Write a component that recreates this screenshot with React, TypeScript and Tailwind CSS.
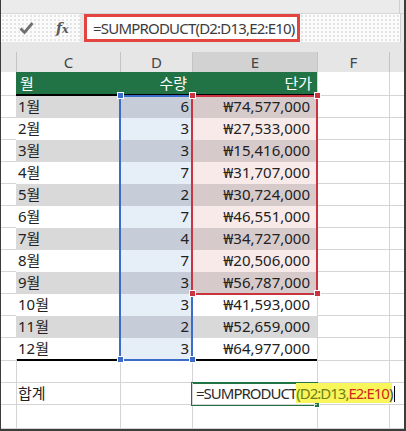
import React from 'react';

type Row = { m: string; q: number; p: string };

const rows: Row[] = [
  { m: '1월', q: 6, p: '₩74,577,000' },
  { m: '2월', q: 3, p: '₩27,533,000' },
  { m: '3월', q: 3, p: '₩15,416,000' },
  { m: '4월', q: 7, p: '₩31,707,000' },
  { m: '5월', q: 2, p: '₩30,724,000' },
  { m: '6월', q: 7, p: '₩46,551,000' },
  { m: '7월', q: 4, p: '₩34,727,000' },
  { m: '8월', q: 7, p: '₩20,506,000' },
  { m: '9월', q: 3, p: '₩56,787,000' },
  { m: '10월', q: 3, p: '₩41,593,000' },
  { m: '11월', q: 2, p: '₩52,659,000' },
  { m: '12월', q: 3, p: '₩64,977,000' },
];

const GRID = 'grid grid-cols-[15px_104px_72px_125px_72px_1fr]';
const DOTS = 'bg-[#fbfbfb] bg-[radial-gradient(#e2e2e2_0.7px,transparent_0.8px)] bg-[length:4px_4px]';

const DataRow: React.FC<{ row: Row; i: number }> = ({ row, i }) => {
  const band = i % 2 === 0;
  const last = i === 11;
  const inRed = i < 9;
  const c = band ? 'bg-[#d9d9d9] border-[#d9d9d9]' : 'bg-white border-white';
  const d = band ? 'bg-[#c6cdd8] border-[#c6cdd8]' : 'bg-[#e6eef8] border-[#e6eef8]';
  const e = inRed
    ? band
      ? 'bg-[#d7cacb] border-[#d7cacb]'
      : 'bg-[#f9eaea] border-[#f9eaea]'
    : band
      ? 'bg-[#d9d9d9] border-[#d9d9d9]'
      : 'bg-white border-white';
  const bottom = last ? 'border-b-2 border-b-black' : 'border-b';
  return (
    <div className={`${GRID} h-[22px] leading-[21px]`}>
      <div className="border-b border-[#d4d4d4] bg-white" />
      <div className={`border-l pl-[1px] ${c} ${bottom}`}>{row.m}</div>
      <div className={`border-l pr-[3px] text-right ${d} ${bottom}`}>{row.q}</div>
      <div className={`border-l pr-[7px] text-right ${e} ${bottom}`}>{row.p}</div>
      <div className="border-l border-b border-[#d4d4d4] bg-white" />
      <div className="border-l border-b border-[#d4d4d4] bg-white" />
    </div>
  );
};

const App: React.FC = () => {
  return (
    <div className="relative flex h-[431px] w-[406px] flex-col overflow-hidden border-l border-r-2 border-b-2 border-[#3c3c3c] bg-white font-['Noto_Sans','Noto_Sans_CJK_KR',sans-serif] text-[15px] text-[#222]">
      {/* top strip */}
      <div className="flex h-[14px] border-b border-[#d6d6d6] bg-[#ebebeb]">
        <div className="flex-1" />
        <div className="w-[5px] border-l border-[#cfcfcf]" />
      </div>

      {/* formula bar */}
      <div className="flex h-[28px] bg-[#e6e6e6]">
        <div className={`flex w-[79px] items-center ${DOTS}`}>
          <svg className="ml-[18px] h-[14px] w-[15px]" viewBox="0 0 15 14">
            <path d="M1.5 7.5 L5.5 11.5 L13.5 2" fill="none" stroke="#707070" strokeWidth="2.8" />
          </svg>
          <span className="ml-[22px] font-['DejaVu_Serif',serif] text-[14px] font-semibold italic text-[#5a5a5a]">
            f<span className="text-[11px]">x</span>
          </span>
        </div>
        <div className="w-[4px]" />
        <div className={`flex flex-1 ${DOTS}`}>
          <div className="flex w-[216px] items-center border-[3px] border-[#e2453f] bg-white pl-[6px] text-[15px] tracking-[-0.8px] text-[#3c3c3c]">
            =SUMPRODUCT(D2:D13,E2:E10)
          </div>
        </div>
        <div className="w-[4px] border-l border-[#cfcfcf] bg-[#ebebeb]" />
      </div>

      {/* band */}
      <div className="h-[10px] bg-[#e6e6e6]" />

      {/* column headers */}
      <div className={`${GRID} h-[20px] bg-[#e6e6e6] text-center leading-[20px] text-[#444]`}>
        <div />
        <div className="border-l border-[#c4c4c4]">C</div>
        <div className="border-l border-[#c4c4c4]">D</div>
        <div className="border-l border-[#c4c4c4] bg-[#d2d2d2]">E</div>
        <div className="border-l border-[#c4c4c4]">F</div>
        <div className="border-l border-[#c4c4c4]" />
      </div>

      {/* table header */}
      <div className={`${GRID} h-[24px] leading-[22px] text-white`}>
        <div className="border-b border-[#d4d4d4] bg-white" />
        <div className="border-b-2 border-black bg-[#217346] pl-[4px]">월</div>
        <div className="border-b-2 border-black bg-[#217346] pr-[5px] text-right">수량</div>
        <div className="border-b-2 border-black bg-[#217346] pr-[5px] text-right">단가</div>
        <div className="border-l border-b border-[#d4d4d4] bg-white" />
        <div className="border-l border-b border-[#d4d4d4] bg-white" />
      </div>

      {rows.map((r, i) => (
        <DataRow key={r.m} row={r} i={i} />
      ))}

      {/* blank row */}
      <div className={`${GRID} h-[23px]`}>
        <div className="border-b border-[#d4d4d4]" />
        <div className="border-l border-b border-[#d4d4d4]" />
        <div className="border-l border-b border-[#d4d4d4]" />
        <div className="border-l border-b border-[#d4d4d4]" />
        <div className="border-l border-b border-[#d4d4d4]" />
        <div className="border-l border-b border-[#d4d4d4]" />
      </div>

      {/* total row */}
      <div className={`${GRID} h-[22px] leading-[21px]`}>
        <div className="border-b border-[#d4d4d4]" />
        <div className="border-l border-b border-[#d4d4d4] pl-[1px]">합계</div>
        <div className="border-l border-b border-[#d4d4d4]" />
        <div className="relative z-10 border-l border-b border-[#d4d4d4] pl-[3px] whitespace-nowrap tracking-[-1px] text-[15px] text-[#2a2a2a]">
          =SUMPRODUCT
          <span className="bg-[#f8f65a]">
            <span className="text-[#6f7f16]">(D2:D13,</span>
            <span className="text-[#d0281c]">E2:E10</span>
            <span className="text-[#444]">)</span>
          </span>
          <span className="ml-[2px] inline-block h-[16px] w-[1px] translate-y-[3px] bg-black" />
        </div>
        <div className="border-l border-b border-[#d4d4d4]" />
        <div className="border-b border-[#d4d4d4]" />
      </div>

      {/* last row */}
      <div className={`${GRID} flex-1`}>
        <div className="border-b border-[#d4d4d4]" />
        <div className="border-l border-b border-[#d4d4d4]" />
        <div className="border-l border-b border-[#d4d4d4]" />
        <div className="border-l border-b border-[#d4d4d4]" />
        <div className="border-l border-b border-[#d4d4d4]" />
        <div className="border-l border-b border-[#d4d4d4]" />
      </div>

      {/* range outlines */}
      <div className="absolute left-[118px] top-[95px] h-[266px] w-[74px] border-2 border-[#3a6cc8]" />
      <div className="absolute left-[190px] top-[95px] h-[200px] w-[127px] border-2 border-[#c9343f]" />
      <div className="absolute left-[190px] top-[382px] h-[24px] w-[127px] border-2 border-[#217346]" />

      {/* handles */}
      <div className="absolute left-[116px] top-[92px] h-[7px] w-[7px] border border-white bg-[#3a6cc8]" />
      <div className="absolute left-[116px] top-[356px] h-[7px] w-[7px] border border-white bg-[#3a6cc8]" />
      <div className="absolute left-[188px] top-[356px] h-[7px] w-[7px] border border-white bg-[#3a6cc8]" />
      <div className="absolute left-[188px] top-[92px] h-[7px] w-[7px] border border-white bg-[#c9343f]" />
      <div className="absolute left-[313px] top-[92px] h-[7px] w-[7px] border border-white bg-[#c9343f]" />
      <div className="absolute left-[188px] top-[290px] h-[7px] w-[7px] border border-white bg-[#c9343f]" />
      <div className="absolute left-[313px] top-[290px] h-[7px] w-[7px] border border-white bg-[#c9343f]" />
      <div className="absolute left-[313px] top-[402px] h-[6px] w-[6px] border border-white bg-[#217346]" />
    </div>
  );
};

export default App;
